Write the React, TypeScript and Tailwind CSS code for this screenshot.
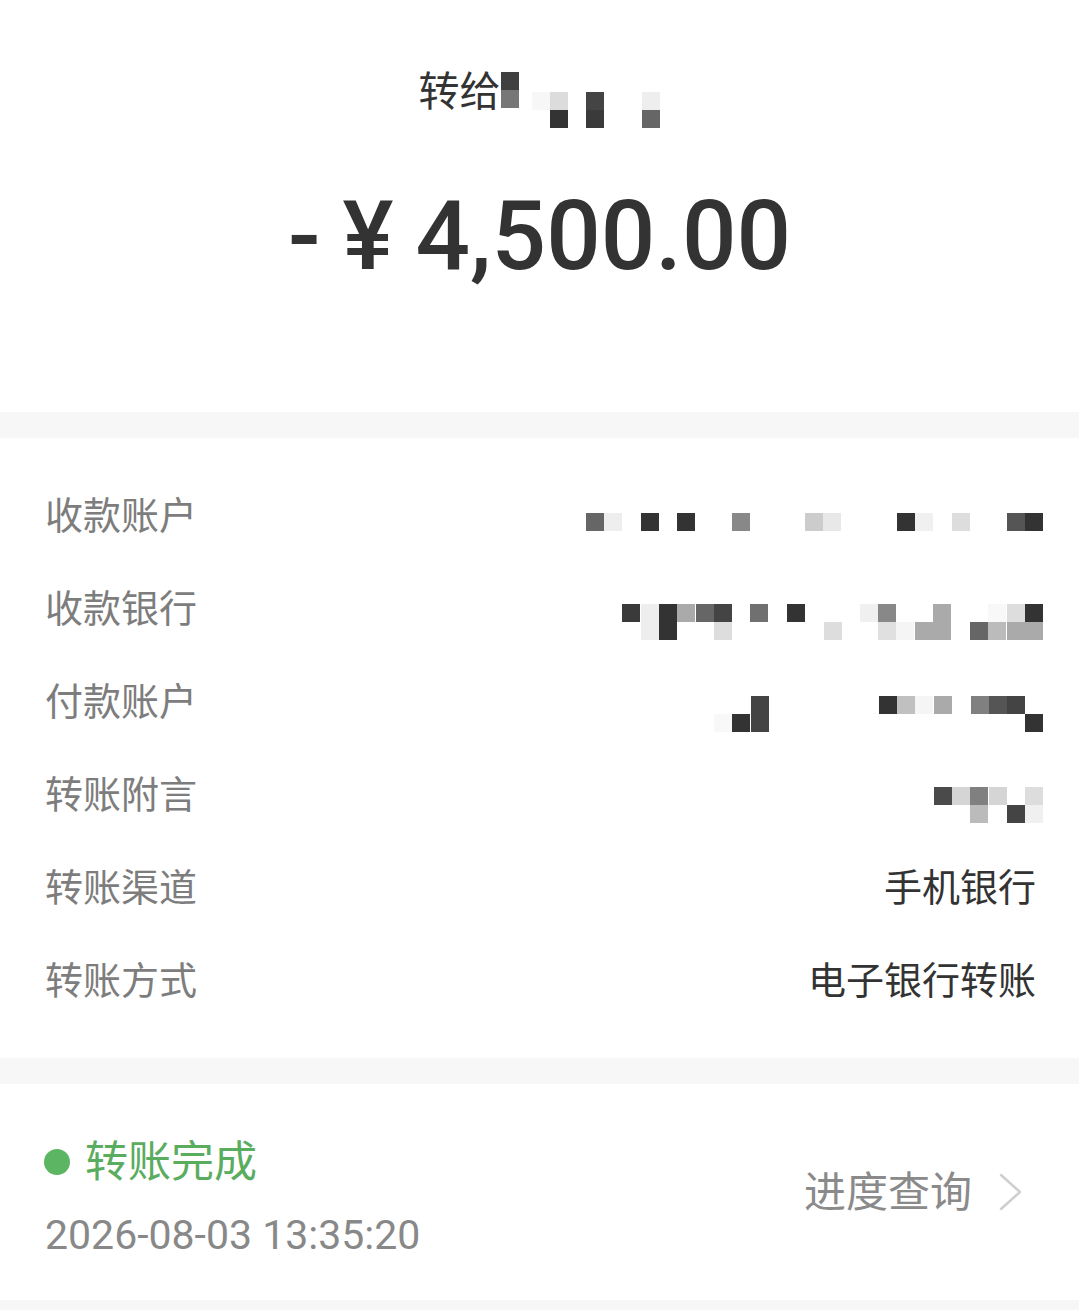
import React from 'react'

type Cell = [number, number, string] // x, y (page coords), colour

const CJK = { fontFamily: 'Roboto, "Noto Sans CJK SC", sans-serif' }

function Mosaic({ ox, oy, w, h, cells, size = 18 }: { ox: number; oy: number; w: number; h: number; cells: Cell[]; size?: number }) {
  return (
    <svg width={w} height={h} viewBox={`0 0 ${w} ${h}`} className="overflow-visible shrink-0">
      {cells.map(([x, y, c], i) => (
        <rect key={i} x={x - ox} y={y - oy} width={size} height={size} fill={c} />
      ))}
    </svg>
  )
}

const titleCells: Cell[] = [
  [500, 72, '#404040'],
  [500, 90, '#777'],
  [531, 92, '#f7f7f7'],
  [549, 92, '#dcdcdc'],
  [549, 110, '#333'],
  [585, 92, '#444'],
  [585, 110, '#3a3a3a'],
  [641, 92, '#eeeeee'],
  [641, 110, '#666'],
]

const row1: Cell[] = [
  [586, 513, '#666'], [604, 513, '#eee'], [641, 513, '#333'], [677, 513, '#333'],
  [732, 513, '#888'], [805, 513, '#ccc'], [823, 513, '#e8e8e8'], [897, 513, '#333'],
  [915, 513, '#f0f0f0'], [952, 513, '#ddd'], [1007, 513, '#555'], [1025, 513, '#333'],
]

const row2: Cell[] = [
  [622, 604, '#3a3a3a'], [641, 604, '#eee'], [659, 604, '#333'], [677, 604, '#aaa'],
  [696, 604, '#666'], [714, 604, '#444'], [750, 604, '#707070'], [787, 604, '#333'],
  [860, 604, '#f0f0f0'], [878, 604, '#888'], [933, 604, '#aaa'], [988, 604, '#f8f8f8'],
  [1007, 604, '#ddd'], [1025, 604, '#333'],
  [641, 622, '#eee'], [659, 622, '#333'], [714, 622, '#ddd'], [824, 622, '#ddd'],
  [878, 622, '#e0e0e0'], [896, 622, '#f5f5f5'], [915, 622, '#aaa'], [933, 622, '#aaa'],
  [970, 622, '#666'], [988, 622, '#bbb'], [1007, 622, '#aaa'], [1025, 622, '#aaa'],
]

const row3: Cell[] = [
  [751, 696, '#444'], [879, 696, '#333'], [897, 696, '#c0c0c0'], [915, 696, '#f5f5f5'],
  [934, 696, '#aaa'], [971, 696, '#808080'], [989, 696, '#555'], [1007, 696, '#444'],
  [714, 714, '#f8f8f8'], [732, 714, '#333'], [751, 714, '#444'], [1025, 714, '#333'],
]

const row4: Cell[] = [
  [934, 787, '#4a4a4a'], [952, 787, '#d5d5d5'], [970, 787, '#808080'], [989, 787, '#d5d5d5'],
  [1025, 787, '#ddd'],
  [970, 805, '#bbb'], [1007, 805, '#444'], [1025, 805, '#f0f0f0'],
]

const rows: { label: string; value?: string; cells?: Cell[] }[] = [
  { label: '收款账户', cells: row1 },
  { label: '收款银行', cells: row2 },
  { label: '付款账户', cells: row3 },
  { label: '转账附言', cells: row4 },
  { label: '转账渠道', value: '手机银行' },
  { label: '转账方式', value: '电子银行转账' },
]

export default function App() {
  return (
    <div className="min-h-[1310px] w-[1079px] bg-[#f7f7f7]" style={CJK}>
      {/* Header */}
      <div className="bg-white h-[412px] pt-[62px]">
        <div className="flex justify-center items-center h-[60px]">
          <span className="text-[41px] leading-[60px] text-[#333]">转给</span>
          <Mosaic ox={500} oy={62} w={160} h={60} cells={titleCells} />
        </div>
        <div className="mt-[59px] flex justify-center items-center h-[110px] text-[96px] leading-[110px] font-medium text-[#333]" style={{ fontFamily: 'Roboto, sans-serif' }}>
          <span className="mr-[22px]">-</span>
          <span className="mr-[22px]">¥</span>
          <span>4,500.00</span>
        </div>
      </div>

      {/* Details */}
      <div className="mt-[26px] bg-white pt-[32px] pb-[30px]">
        {rows.map((r, i) => (
          <div key={r.label} className="flex items-center justify-between h-[93px] pl-[45px] pr-[43px]">
            <span className="text-[38px] text-[#7d7d7d]">{r.label}</span>
            {r.cells ? (
              <div className="-mr-[7px]">
                <Mosaic ox={560} oy={470 + 93 * i} w={483} h={93} cells={r.cells} />
              </div>
            ) : (
              <span className="text-[38px] text-[#333]">{r.value}</span>
            )}
          </div>
        ))}
      </div>

      {/* Status */}
      <div className="mt-[26px] bg-white h-[216px] flex items-center justify-between pl-[44px] pr-[55px]">
        <div className="flex flex-col self-start pt-[50px]">
          <div className="flex items-center h-[56px]">
            <span className="w-[26px] h-[26px] rounded-full bg-[#5cb563]" />
            <span className="ml-[15px] text-[43px] leading-[56px] text-[#5aac5f]">转账完成</span>
          </div>
          <span className="mt-[19px] ml-[1px] text-[41px] leading-[52px] text-[#888]">2026-08-03 13:35:20</span>
        </div>
        <div className="flex items-center">
          <span className="text-[42px] text-[#8a8a8a]">进度查询</span>
          <svg width="26" height="38" viewBox="0 0 26 38" className="ml-[26px]">
            <polyline points="3,2 22,19 3,36" fill="none" stroke="#cfcfcf" strokeWidth="2.5" strokeLinecap="round" strokeLinejoin="round" />
          </svg>
        </div>
      </div>
    </div>
  )
}
